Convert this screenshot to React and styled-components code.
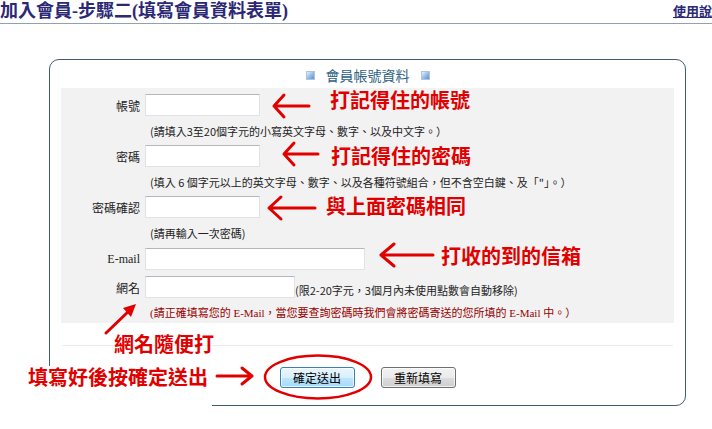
import React from 'react';
import styled, { createGlobalStyle } from 'styled-components';

const GlobalStyle = createGlobalStyle`
  html, body { margin: 0; padding: 0; background: #fff; }
  body { width: 712px; height: 429px; overflow: hidden; font-family: "Noto Sans CJK TC", sans-serif; }
  * { box-sizing: border-box; }
`;

const Page = styled.div`
  position: relative;
  width: 712px;
  height: 429px;
  overflow: hidden;
`;

const Header = styled.header`
  height: 24px;
  border-bottom: 1px solid #8ea3ad;
  display: flex;
  justify-content: space-between;
  align-items: center;
  overflow: hidden;
`;

const Title = styled.h1`
  margin: 0;
  font: bold 18px/23px "Liberation Serif", "Noto Sans CJK TC", serif;
  color: #2b2875;
  white-space: nowrap;
`;

const HelpLink = styled.a`
  font: bold 13px/23px "Liberation Serif", "Noto Sans CJK TC", serif;
  color: #2b2875;
  text-decoration: underline;
  margin-right: -13px;
  white-space: nowrap;
  flex-shrink: 0;
`;

const Panel = styled.section`
  margin: 35px 0 0 49px;
  width: 637px;
  height: 347px;
  border: 1px solid #3e5f6b;
  border-radius: 10px;
  padding: 0 11px;
  display: flex;
  flex-direction: column;
`;

const PanelTitle = styled.div`
  height: 28px;
  padding-top: 2px;
  display: flex;
  align-items: center;
  justify-content: center;
  gap: 11px;
  font-size: 14px;
  color: #2e6282;
`;

const Bullet = styled.span`
  width: 9px;
  height: 9px;
  border: 1px solid #b5c3d3;
  background: linear-gradient(135deg, #e8f3ff 0%, #9cc3ee 45%, #5b8fd6 100%);
`;

const FormArea = styled.div`
  background: #f2f2f2;
  padding-top: 4px;
  height: 235px;
`;

const Row = styled.div`
  display: grid;
  grid-template-columns: 79px 1fr;
  column-gap: 5px;
  align-items: center;
  height: ${p => p.$h}px;
`;

const Label = styled.label`
  text-align: right;
  font-size: 12px;
  font-family: ${p => (p.$serif ? '"Liberation Serif", "Noto Sans CJK TC", serif' : '"Noto Sans CJK TC", sans-serif')};
  color: #222;
`;

const Field = styled.div`
  display: flex;
  align-items: center;
`;

const Input = styled.input`
  width: ${p => p.$w}px;
  height: 22px;
  border: 1px solid #dfe3e8;
  border-top-color: #b3b8bf;
  background: #fff;
  padding: 0 3px;
  margin: 0;
  outline: none;
`;

const Hint = styled.span`
  padding-left: ${p => (p.$inline ? 0 : 5)}px;
  padding-top: ${p => (p.$inline ? 5 : 0)}px;
  font-size: 11px;
  color: ${p => (p.$warn ? '#990000' : '#222')};
  font-family: ${p => (p.$warn ? '"Liberation Serif", "Noto Sans CJK TC", serif' : '"Noto Sans CJK TC", sans-serif')};
  white-space: nowrap;
`;

const Footer = styled.div`
  margin: 22px 1px 0;
  border-top: 1px solid #ececec;
  padding-top: 21px;
  display: flex;
  justify-content: center;
  gap: 26px;
`;

const Button = styled.button`
  width: 75px;
  height: 21px;
  padding: 0;
  font: 12px/19px "Noto Sans CJK TC", sans-serif;
  color: #000;
  border-radius: 3px;
  border: 1px solid ${p => (p.$primary ? '#3c7fb1' : '#707070')};
  background: ${p =>
    p.$primary
      ? 'linear-gradient(#eaf6fd 0%, #d9f0fc 50%, #bee6fd 51%, #a7d9f5 100%)'
      : 'linear-gradient(#f2f2f2 0%, #ebebeb 50%, #dddddd 51%, #cfcfcf 100%)'};
  box-shadow: inset 0 0 0 1px rgba(255,255,255,0.7);
`;

const Note = styled.span`
  position: absolute;
  left: ${p => p.$x}px;
  top: ${p => p.$y}px;
  font: bold 20px/22px "Noto Sans CJK TC", sans-serif;
  color: #e00000;
  white-space: nowrap;
`;

const CoverNote = styled.div`
  position: absolute;
  left: 0;
  top: 366px;
  width: 212px;
  height: 46px;
  background: #fff;
  padding-left: 28px;
  font: bold 20px/22px "Noto Sans CJK TC", sans-serif;
  color: #e00000;
  white-space: nowrap;
`;

const Overlay = styled.svg`
  position: absolute;
  left: 0;
  top: 0;
  pointer-events: none;
`;

const leftArrow = (tx, ty, end, head) =>
  `M${end} ${ty} L${tx} ${ty} M${tx + head} ${ty - 11} L${tx} ${ty} L${tx + head} ${ty + 11}`;

export default function App() {
  return (
    <Page>
      <GlobalStyle />
      <Header>
        <Title>加入會員-步驟二(填寫會員資料表單)</Title>
        <HelpLink href="#">使用說明</HelpLink>
      </Header>
      <Panel>
        <PanelTitle>
          <Bullet />
          <span>會員帳號資料</span>
          <Bullet />
        </PanelTitle>
        <FormArea>
          <Row $h={26}>
            <Label>帳號</Label>
            <Field><Input $w={115} /></Field>
          </Row>
          <Row $h={25}>
            <span />
            <Hint>(請填入3至20個字元的小寫英文字母、數字、以及中文字。）</Hint>
          </Row>
          <Row $h={26}>
            <Label>密碼</Label>
            <Field><Input $w={115} type="password" /></Field>
          </Row>
          <Row $h={25}>
            <span />
            <Hint>(填入 6 個字元以上的英文字母、數字、以及各種符號組合，但不含空白鍵、及「"」。）</Hint>
          </Row>
          <Row $h={26}>
            <Label>密碼確認</Label>
            <Field><Input $w={115} type="password" /></Field>
          </Row>
          <Row $h={25}>
            <span />
            <Hint>(請再輸入一次密碼)</Hint>
          </Row>
          <Row $h={28}>
            <Label $serif>E-mail</Label>
            <Field><Input $w={220} /></Field>
          </Row>
          <Row $h={28}>
            <Label>網名</Label>
            <Field>
              <Input $w={150} />
              <Hint $inline>(限2-20字元，3個月內未使用點數會自動移除)</Hint>
            </Field>
          </Row>
          <Row $h={22}>
            <span />
            <Hint $warn>(請正確填寫您的 E-Mail，當您要查詢密碼時我們會將密碼寄送的您所填的 E-Mail 中。）</Hint>
          </Row>
        </FormArea>
        <Footer>
          <Button $primary>確定送出</Button>
          <Button>重新填寫</Button>
        </Footer>
      </Panel>

      <Note $x={330} $y={89}>打記得住的帳號</Note>
      <Note $x={331} $y={145}>打記得住的密碼</Note>
      <Note $x={326} $y={195}>與上面密碼相同</Note>
      <Note $x={441} $y={245}>打收的到的信箱</Note>
      <Note $x={114} $y={333}>網名隨便打</Note>
      <CoverNote>填寫好後按確定送出</CoverNote>

      <Overlay width="712" height="429" viewBox="0 0 712 429">
        <g fill="none" stroke="#e00000" strokeWidth="3" strokeLinecap="round" strokeLinejoin="round">
          <path d={leftArrow(274, 106, 309, 10)} />
          <path d={leftArrow(284, 154, 318, 10)} />
          <path d={leftArrow(269, 208, 315, 12)} />
          <path d={leftArrow(381, 255, 433, 13)} />
          <path d="M217 376 L252 376 M242 368 L252 376 L242 384" />
          <path d="M106 333 L131 309" />
          <ellipse cx="318" cy="377" rx="53" ry="21.5" strokeWidth="2.5" />
        </g>
        <polygon points="136,304 131,317 123,308" fill="#e00000" />
      </Overlay>
    </Page>
  );
}
